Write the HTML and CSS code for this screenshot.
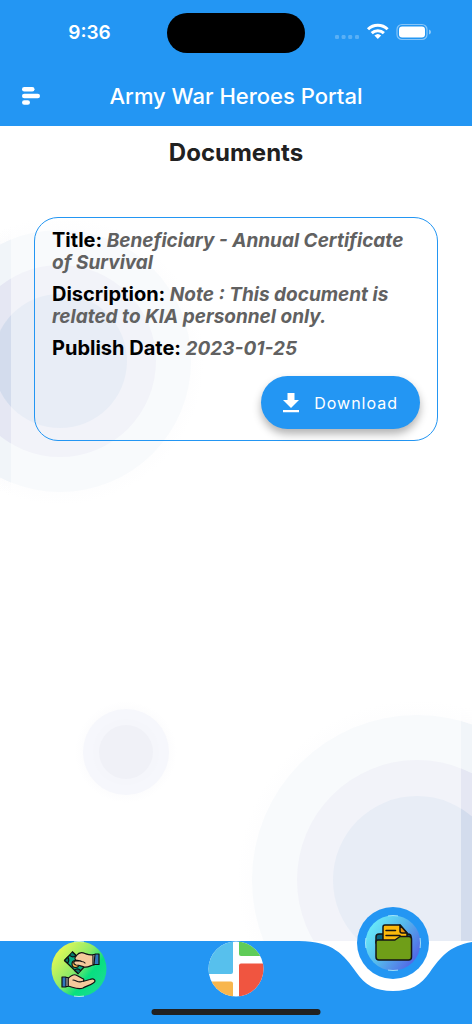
FILE: index.html
```html
<!DOCTYPE html>
<html lang="en">
<head>
<meta charset="utf-8">
<meta name="viewport" content="width=device-width, initial-scale=1">
<title>Army War Heroes Portal</title>
<link rel="stylesheet" href="styles.css">
</head>
<body>
<header class="header">
  <div class="status">
    <span class="status-time">9:36</span>
    <span class="island"></span>
    <svg class="status-icons" width="98" height="20" viewBox="0 0 98 20" aria-hidden="true">
      <g fill="#fff" fill-opacity=".25"><rect x="0" y="13" width="4" height="4" rx="1.300"/><rect x="6.600" y="13" width="4" height="4" rx="1.300"/><rect x="13.200" y="13" width="4" height="4" rx="1.300"/><rect x="20" y="13" width="4" height="4" rx="1.300"/></g>
      <g fill="none" stroke="#fff" stroke-width="3"><path d="M33 7.200a14 14 0 0 1 19.600 0"/><path d="M36.700 11.200a8.800 8.800 0 0 1 12.200 0"/></g>
      <path d="M39.400 13.600a5 5 0 0 1 6.800 0L42.800 17z" fill="#fff"/>
      <rect x="62" y="2.500" width="30" height="15" rx="5" fill="none" stroke="#fff" stroke-opacity=".45" stroke-width="1.200"/>
      <rect x="64" y="4.500" width="26" height="11" rx="3.200" fill="#fff"/>
      <path d="M94 7.600q2 .6 2 2.400t-2 2.400z" fill="#fff" fill-opacity=".5"/>
    </svg>
  </div>
  <div class="appbar">
    <button class="menu" type="button" aria-label="Menu">
      <svg width="18" height="18" viewBox="0 0 18 18" fill="#fff"><rect x="0" y="0" width="12.500" height="4.500" rx="2.250"/><rect x="0" y="6.700" width="18" height="4.500" rx="2.250"/><rect x="0" y="13.300" width="8" height="4.500" rx="2.250"/></svg>
    </button>
    <h1 class="app-title">Army War Heroes Portal</h1>
  </div>
</header>

<main class="main">
  <svg class="rings rings-left" width="210" height="290" viewBox="0 0 210 290" aria-hidden="true">
    <defs>
      <radialGradient id="haze"><stop offset=".8" stop-color="#fcfcfd"/><stop offset="1" stop-color="#fff"/></radialGradient>
      <clipPath id="edge-left"><rect width="11" height="290"/></clipPath>
      <g id="target-left"><circle cx="60" cy="145" r="144" fill="url(#haze)"/><circle cx="60" cy="145" r="131" fill="#f8fafc"/><circle cx="60" cy="145" r="96" fill="#f2f3f9"/><circle cx="60" cy="145" r="67" fill="#e8edf6"/></g>
    </defs>
    <use href="#target-left"/>
    <g class="overlap" clip-path="url(#edge-left)"><use href="#target-left"/></g>
  </svg>
  <svg class="rings rings-small" width="104" height="104" viewBox="0 0 104 104" aria-hidden="true">
    <circle cx="52" cy="52" r="51" fill="url(#haze)"/><circle cx="52" cy="52" r="43" fill="#f6f7fc"/><circle cx="52" cy="52" r="33" fill="#f5f6fb"/><circle cx="52" cy="52" r="27" fill="#f0f1f7"/>
  </svg>
  <svg class="rings rings-right" width="240" height="245" viewBox="0 0 240 245" aria-hidden="true">
    <defs>
      <clipPath id="edge-right"><rect x="229" width="11" height="245"/></clipPath>
      <g id="target-right"><circle cx="185" cy="184" r="180" fill="url(#haze)"/><circle cx="185" cy="184" r="165" fill="#f8fafc"/><circle cx="185" cy="184" r="120" fill="#f2f3f9"/><circle cx="185" cy="184" r="84" fill="#e8edf6"/></g>
    </defs>
    <use href="#target-right"/>
    <g class="overlap" clip-path="url(#edge-right)"><use href="#target-right"/></g>
  </svg>

  <h2 class="page-title">Documents</h2>
  <article class="card">
    <p class="field"><b class="label">Title:</b> <em class="value">Beneficiary - Annual Certificate of Survival</em></p>
    <p class="field"><b class="label">Discription:</b> <em class="value">Note : This document is related to KIA personnel only.</em></p>
    <p class="field"><b class="label">Publish Date:</b> <em class="value">2023-01-25</em></p>
    <button class="download" type="button">
      <svg width="16" height="20" viewBox="0 0 16 20" fill="#fff" aria-hidden="true"><path d="M4.500 0h7v7H16l-8 8-8-8h4.500zM0 17h16v2.300H0z"/></svg>
      Download
    </button>
  </article>
</main>

<nav class="nav" aria-label="Main">
  <a class="tab" href="#benefits" aria-label="Benefits">
    <svg width="56" height="56" viewBox="0 0 56 56">
      <defs>
        <linearGradient id="lime" x1="0" y1=".15" x2=".85" y2=".85"><stop offset="0" stop-color="#f5fb52"/><stop offset=".5" stop-color="#8cea68"/><stop offset=".75" stop-color="#08df80"/><stop offset="1" stop-color="#18dc90"/></linearGradient>
      </defs>
      <circle cx="28" cy="28" r="27.500" fill="url(#lime)"/>
      <path d="M23 .9q5-.8 10 0M23 55.100q5 .8 10 0" stroke="#dcfff0" stroke-width=".8" fill="none"/>
      <g stroke="#111" stroke-width="1.200" stroke-linejoin="round" stroke-linecap="round">
        <path d="M13.500 19.500 21.500 11 35 24 27 32.500z" fill="#08ad83"/>
        <path d="m13.500 19.500 3.200-3.400q2.300 3.400-.2 6zM21.500 11l3.500 3.400q-3 2.800-6 .2M27 32.500l-3.500-3.300q3-2.800 6 .3" fill="#087a68"/>
        <circle cx="24.500" cy="23" r="3.500" fill="#f3b64b"/>
        <path d="M43 14v10c-4 0-5 3-10 2-3-1-5-2-8-2-3-.5-3-4 0-4h5l-5-1c-2-1-1-3 .5-4.500C28 11 31 11 34 12.500c3 1.500 5 1.500 9 1.500z" fill="#f5c99c"/>
        <path d="M30 20.500q3 0 4 1.500" fill="none"/>
        <path d="M42 13.500h3v10h-3z" fill="#fff"/><path d="M44 13h4v10.500h-5z" fill="#3177bd"/>
        <path d="M17 37.500c3-3 6-5 9-3l5 2.800c2 0 2.500 2 .8 3.200l7-2c3-1.200 5.200-.3 5.200 1.500 0 3-9 5-12 7-5 2-9-.5-15-2z" fill="#f5c99c"/>
        <path d="M22 39c3 0 5 3 9 1.500" fill="none"/>
        <path d="M14 36.500h3v9h-3z" fill="#fff"/><path d="M11 36h4v10h-4z" fill="#3177bd"/>
      </g>
    </svg>
  </a>
  <a class="tab" href="#dashboard" aria-label="Dashboard">
    <svg width="56" height="56" viewBox="0 0 56 56">
      <defs><clipPath id="disc"><circle cx="28" cy="28" r="27.500"/></clipPath></defs>
      <g clip-path="url(#disc)"><rect width="56" height="56" fill="#fff"/><rect x="-3" y="-3" width="28" height="36" rx="2" fill="#57c0ed"/><rect x="31" y="-3" width="28" height="18" rx="2" fill="#5fcc58"/><rect x="-3" y="40.500" width="28" height="20" rx="2" fill="#f8b64d"/><rect x="31" y="22.500" width="28" height="36" rx="2" fill="#f05540"/></g>
    </svg>
  </a>
  <a class="tab tab-active" href="#documents" aria-label="Documents" aria-current="page">
    <svg class="notch" width="188" height="51" viewBox="0 0 188 51" aria-hidden="true"><path d="M0 0C34 0 45 14 57 31C66 44 76 50 94 50C112 50 122 44 131 31C143 14 154 0 188 0z" fill="#fff"/></svg>
    <svg class="bubble" width="72" height="72" viewBox="0 0 72 72">
      <defs><linearGradient id="sky" x1="0" y1=".1" x2="1" y2=".8"><stop offset="0" stop-color="#6cf5fc"/><stop offset=".5" stop-color="#56b7ec"/><stop offset="1" stop-color="#515de5"/></linearGradient></defs>
      <circle cx="36" cy="36" r="36" fill="#2396f3"/>
      <circle cx="36" cy="36" r="27.500" fill="url(#sky)"/>
      <path d="M31 8.900q5-.8 10 0M31 63.100q5 .8 10 0M8.900 31q-.8 5 0 10M63.100 31q.8 5 0 10" stroke="#b9f1fb" stroke-width=".8" fill="none"/>
      <g stroke="#151515" stroke-width="1.500" stroke-linejoin="round" stroke-linecap="round">
        <path d="M19 36v-6q0-3 3-3h29q3 0 3 3v6z" fill="#08627d"/>
        <path d="M26 36V20q0-2 2-2h15l7 8v10z" fill="#fcb90c"/>
        <path d="M43 18v6q0 2 2 2h5z" fill="#e8920a"/>
        <path d="M29 23.500h9.500M29 28.500h14" fill="none"/>
        <path d="M19 35q0-2 2-2h17l5-3.500h9q2.500 0 2.500 2.500v18q0 3-3 3H22q-3 0-3-3z" fill="#6f9e18"/>
      </g>
    </svg>
  </a>
  <span class="home-indicator"></span>
</nav>
</body>
</html>
```
FILE: styles.css
```css
* { box-sizing: border-box; }
body {
  margin: 0;
  min-height: 100vh;
  display: flex;
  flex-direction: column;
  background: #fff;
  color: #212121;
  font-family: Inter, "Liberation Sans", sans-serif;
}
.header { background: #2396f3; color: #fff; }
.status {
  height: 66px;
  display: grid;
  grid-template-columns: 1fr 138px 1fr;
  align-items: center;
}
.status-time { font-size: 19px; line-height: 24px; font-weight: 600; padding-left: 12px; text-align: center; }
.island { height: 40px; border-radius: 20px; background: #000; }
.status-icons { justify-self: center; margin: 0 10px 2px 0; }
.appbar {
  height: 60px;
  display: grid;
  grid-template-columns: 62px 1fr 62px;
  align-items: center;
}
.menu { display: flex; justify-content: center; padding: 0; border: 0; background: none; height: 40px; align-items: center; }
.app-title { margin: 0; text-align: center; font-size: 22px; line-height: 28px; font-weight: 500; }

.main { flex: 1; position: relative; overflow: hidden; padding: 9px 34px 0; isolation: isolate; }
.rings { position: absolute; z-index: -1; }
.rings-left { left: 0; top: 90px; }
.rings-small { left: 74px; bottom: 137px; }
.rings-right { right: 0; bottom: 0; }
.overlap { mix-blend-mode: multiply; }

.page-title { margin: 0 0 46px; text-align: center; font-size: 24px; line-height: 36px; font-weight: 700; }
.card {
  display: flex;
  flex-direction: column;
  gap: 10px;
  padding: 12px 17px 11px;
  border: 1px solid #2396f3;
  border-radius: 24px;
}
.field { margin: 0; font-size: 19px; line-height: 22px; font-weight: 700; }
.label { font-size: 20px; line-height: 20px; font-weight: 700; color: #000; }
.value { color: #616161; }
.download {
  align-self: flex-end;
  display: flex;
  align-items: center;
  gap: 15px;
  height: 53px;
  margin-top: 6px;
  padding: 0 22px;
  border: 0;
  border-radius: 27px;
  background: #2396f3;
  color: #fff;
  font: 400 16px/20px Inter, "Liberation Sans", sans-serif;
  letter-spacing: 1px;
  box-shadow: 0 5px 8px rgba(0, 0, 0, .3);
}

.nav {
  position: relative;
  display: grid;
  grid-template-columns: repeat(3, 1fr);
  height: 83px;
  background: #2396f3;
  overflow-x: clip;
}
.tab { display: flex; justify-content: center; align-items: flex-start; }
.tab-active { position: relative; }
.notch { position: absolute; left: 50%; top: 0; transform: translateX(-50%); }
.bubble { position: absolute; left: 50%; top: -34px; transform: translateX(-50%); }
.home-indicator {
  position: absolute;
  left: 50%;
  bottom: 9px;
  width: 169px;
  height: 6px;
  border-radius: 3px;
  background: #212121;
  transform: translateX(-50%);
}
```
